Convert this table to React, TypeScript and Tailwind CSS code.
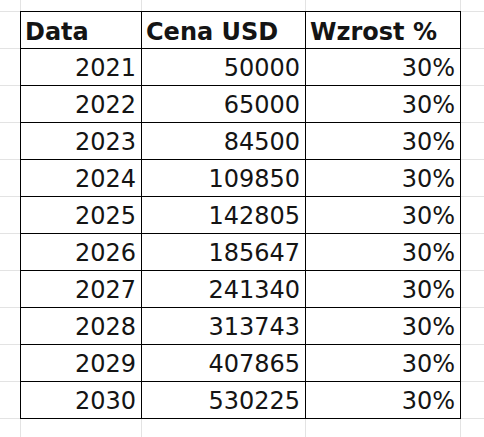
const rows: [string, string, string][] = [
  ['2021', '50000', '30%'],
  ['2022', '65000', '30%'],
  ['2023', '84500', '30%'],
  ['2024', '109850', '30%'],
  ['2025', '142805', '30%'],
  ['2026', '185647', '30%'],
  ['2027', '241340', '30%'],
  ['2028', '313743', '30%'],
  ['2029', '407865', '30%'],
  ['2030', '530225', '30%'],
]

// light spreadsheet grid strip (above / below the table)
function Strip({ className }: { className: string }) {
  return (
    <div className={`flex ${className}`}>
      <div className="w-[21px] shrink-0 border-r border-[#e3e3e3]" />
      <div className="w-[121px] shrink-0 border-r border-[#e3e3e3]" />
      <div className="w-[164px] shrink-0 border-r border-[#e3e3e3]" />
      <div className="w-[155px] shrink-0 border-r border-[#e3e3e3]" />
      <div className="flex-1" />
    </div>
  )
}

function Gutter({ width }: { width: string }) {
  return (
    <div className={`${width} shrink-0 border-t border-[#e3e3e3]`}>
      {Array.from({ length: 11 }).map((_, i) => (
        <div key={i} className="h-[37px] border-b border-[#e3e3e3]" />
      ))}
    </div>
  )
}

export default function App() {
  return (
    <div
      className="w-[484px] h-[437px] overflow-hidden bg-white text-[#141414]"
      style={{ fontFamily: '"DejaVu Sans", "Liberation Sans", sans-serif' }}
    >
      <Strip className="h-[11px]" />
      <div className="flex">
        <Gutter width="w-[20px]" />
        <div className="grid grid-cols-[121px_164px_155px] border-l border-t border-black">
          <div className="h-[37px] border-r border-b border-black pl-[4px] flex items-center text-[24px] font-bold leading-none pt-[3px]">
            Data
          </div>
          <div className="h-[37px] border-r border-b border-black pl-[4px] flex items-center text-[24px] font-bold leading-none pt-[3px]">
            Cena USD
          </div>
          <div className="h-[37px] border-r border-b border-black pl-[4px] flex items-center text-[24px] font-bold leading-none pt-[3px]">
            Wzrost %
          </div>
          {rows.map((r) =>
            r.map((v, j) => (
              <div
                key={r[0] + j}
                className="h-[37px] border-r border-b border-black pr-[5px] flex items-center justify-end text-[24px] font-normal leading-none pt-[1px]"
              >
                {v}
              </div>
            ))
          )}
        </div>
        <Gutter width="flex-1" />
      </div>
      <Strip className="h-[30px]" />
    </div>
  )
}
